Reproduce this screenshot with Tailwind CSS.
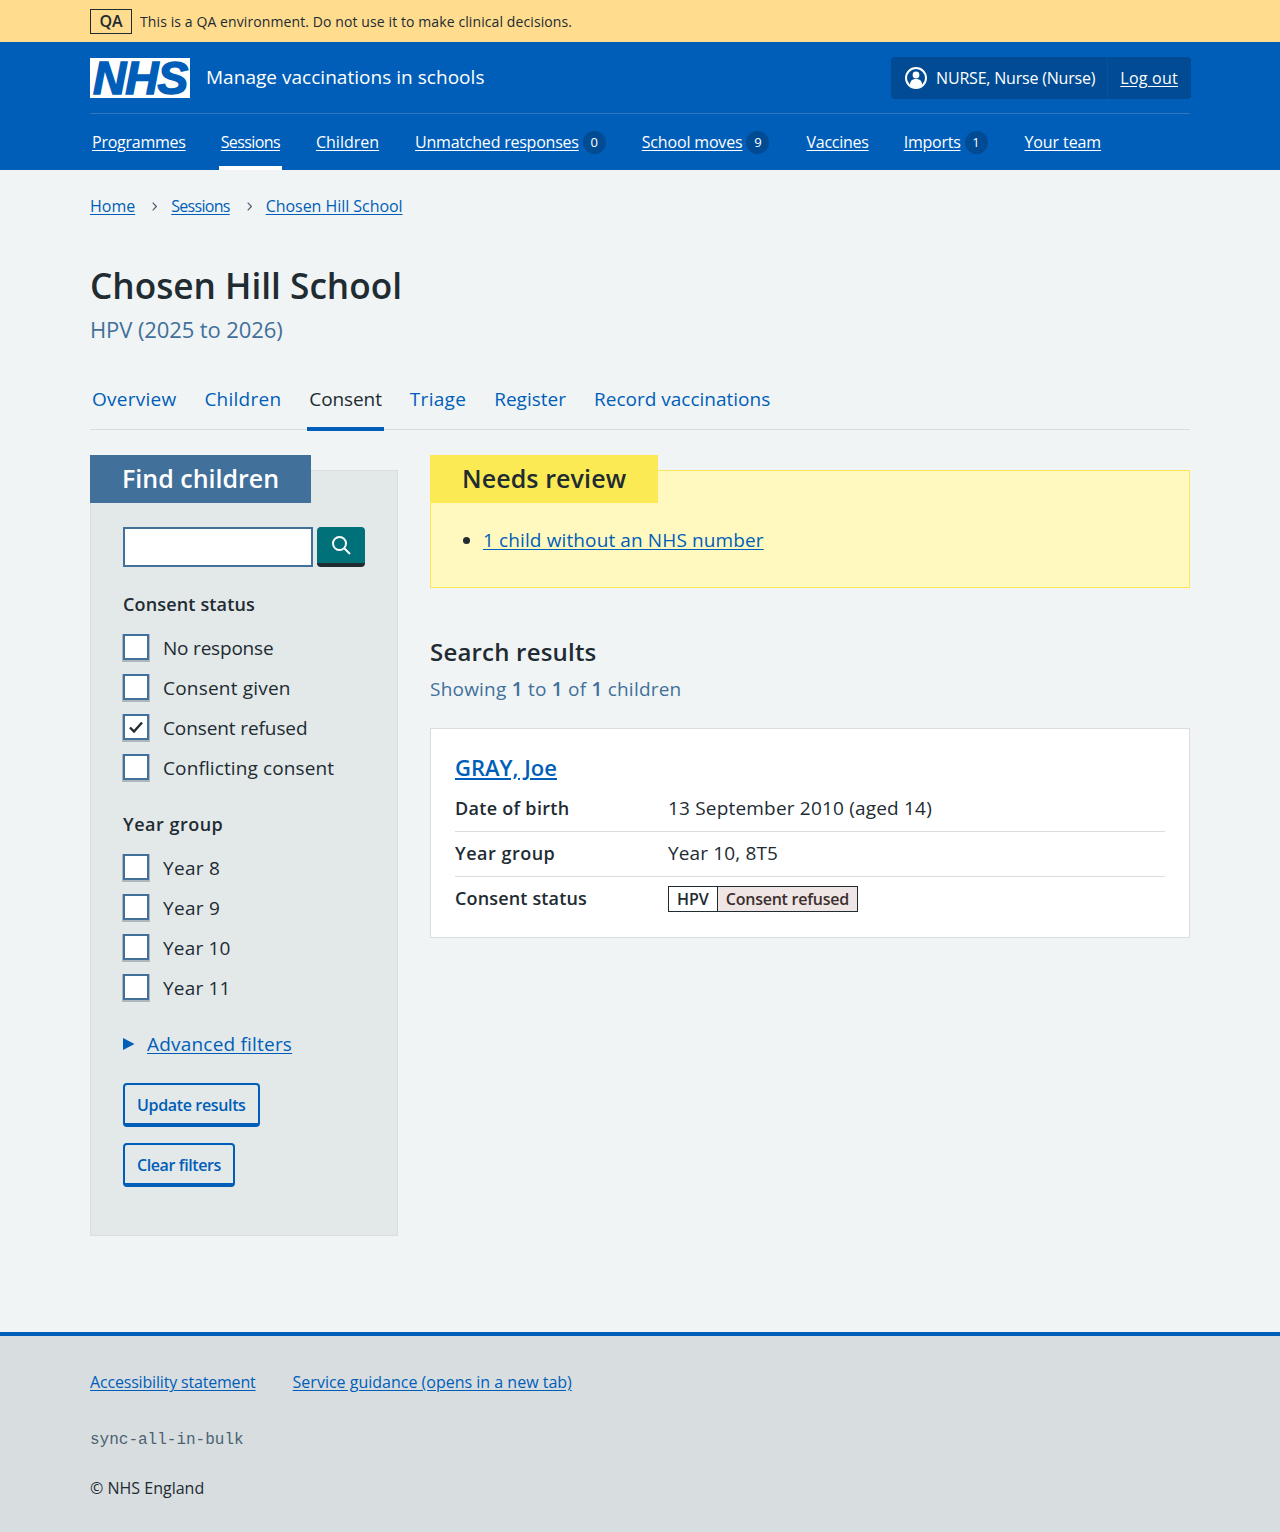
<!DOCTYPE html>
<html lang="en">
<head>
  <meta charset="UTF-8" />
  <meta name="viewport" content="width=device-width, initial-scale=1.0" />
  <title>Chosen Hill School – Manage vaccinations in schools</title>
  <script src="https://cdn.jsdelivr.net/npm/@tailwindcss/browser@4"></script>
</head>

<body class="bg-[#f0f4f5] text-[#212b32] font-['Open_Sans',sans-serif] min-h-[1532px] flex flex-col">
  <!-- QA banner -->
  <div class="h-[42px] bg-[#ffdc8e] px-[90px] flex items-center">
    <strong class="w-[42px] h-[25px] border border-[#212b32] flex items-center justify-center text-[16px] font-semibold">QA</strong>
    <p class="ml-[8px] text-[14px] tracking-[0.1px]">This is a QA environment. Do not use it to make clinical decisions.</p>
  </div>

  <!-- Header -->
  <header class="h-[128px] bg-[#005eb8] px-[90px] text-white">
    <div class="h-[72px] border-b border-[#2f78c0] flex items-start">
      <a href="#" class="mt-[16px] w-[100px] h-[40px] bg-white text-[#005eb8] flex items-center justify-center font-['Liberation_Sans',sans-serif] font-bold italic text-[46px] leading-[40px] tracking-[-1px] [-webkit-text-stroke:1.5px_#005eb8]">NHS</a>
      <span class="ml-[16px] mt-[21px] text-[19px] tracking-[0.03px]">Manage vaccinations in schools</span>
      <div class="ml-auto mr-[-1px] mt-[15px] h-[42px] bg-[#004b93] rounded-[4px] flex items-center text-[16px]">
        <div class="h-full pl-[14px] pr-[12px] flex items-center gap-[9px] border-r border-[#00549f]">
          <svg class="w-[22px] h-[22px]" viewBox="0 0 22 22" fill="none">
            <circle cx="11" cy="11" r="10" stroke="white" stroke-width="2" />
            <circle cx="11" cy="8" r="3.4" fill="white" />
            <path d="M5 18c0-4 2-6 6-6s6 2 6 6c-1.500 1.500-3.500 2.500-6 2.500s-4.500-1-6-2.500z" fill="white" />
          </svg>
          <span class="tracking-[-0.2px]">NURSE, Nurse (Nurse)</span>
        </div>
        <a href="#" class="pl-[12px] pr-[13px] underline underline-offset-2 tracking-[0.25px]">Log out</a>
      </div>
    </div>
    <nav class="h-[56px] flex text-[16px]">
      <a href="#" class="ml-[2px] mt-[16px] underline underline-offset-2 tracking-[-0.25px]">Programmes</a>
      <div class="ml-[35px] relative">
        <a href="#" class="block mt-[16px] underline underline-offset-2 tracking-[-0.6px]">Sessions</a>
        <span class="absolute left-[-2px] right-[-2px] bottom-0 h-[4px] bg-white"></span>
      </div>
      <a href="#" class="ml-[36px] mt-[16px] underline underline-offset-2">Children</a>
      <a href="#" class="ml-[36px] mt-[16px] underline underline-offset-2 tracking-[-0.22px]">Unmatched responses</a>
      <span class="ml-[4px] mt-[17px] w-[23px] h-[23px] rounded-full bg-[#004b93] flex items-center justify-center text-[13px]">0</span>
      <a href="#" class="ml-[36px] mt-[16px] underline underline-offset-2 tracking-[-0.17px]">School moves</a>
      <span class="ml-[4px] mt-[17px] w-[23px] h-[23px] rounded-full bg-[#004b93] flex items-center justify-center text-[13px]">9</span>
      <a href="#" class="ml-[37px] mt-[16px] underline underline-offset-2 tracking-[-0.25px]">Vaccines</a>
      <a href="#" class="ml-[35px] mt-[16px] underline underline-offset-2 tracking-[-0.25px]">Imports</a>
      <span class="ml-[4px] mt-[17px] w-[23px] h-[23px] rounded-full bg-[#004b93] flex items-center justify-center text-[13px]">1</span>
      <a href="#" class="ml-[37px] mt-[16px] underline underline-offset-2 tracking-[-0.1px]">Your team</a>
    </nav>
  </header>

  <main class="flex-1 px-[90px]">
    <!-- Breadcrumbs -->
    <nav class="h-[72px] flex items-center text-[16px] text-[#005eb8]">
      <a href="#" class="underline underline-offset-2">Home</a>
      <svg class="ml-[17px] mr-[14px] w-[5px] h-[9px]" viewBox="0 0 5 9" fill="none"><path d="M.7.7l3.600 3.800L.7 8.300" stroke="#4c6272" stroke-width="1.200" /></svg>
      <a href="#" class="underline underline-offset-2 tracking-[-0.7px]">Sessions</a>
      <svg class="ml-[17px] mr-[14px] w-[5px] h-[9px]" viewBox="0 0 5 9" fill="none"><path d="M.7.7l3.600 3.800L.7 8.300" stroke="#4c6272" stroke-width="1.200" /></svg>
      <a href="#" class="underline underline-offset-2 tracking-[-0.05px]">Chosen Hill School</a>
    </nav>

    <h1 class="mt-[21px] text-[35.2px] leading-[45px] font-semibold">Chosen Hill School</h1>
    <p class="mt-[6px] text-[22px] leading-[30px] text-[#41709a] tracking-[-0.1px]">HPV (2025 to 2026)</p>

    <!-- Tabs -->
    <nav class="mt-[30px] h-[56px] border-b border-[#d8dde0] flex text-[19px] text-[#005eb8]">
      <a href="#" class="px-[2px] pt-[11px] tracking-[0.25px]">Overview</a>
      <a href="#" class="ml-[24px] px-[2px] pt-[11px] tracking-[0.25px]">Children</a>
      <a href="#" class="ml-[24px] px-[2px] pt-[11px] text-[#212b32] border-b-4 border-[#005eb8] h-[57px] tracking-[-0.1px]">Consent</a>
      <a href="#" class="ml-[24px] px-[2px] pt-[11px] tracking-[0.3px]">Triage</a>
      <a href="#" class="ml-[24px] px-[2px] pt-[11px]">Register</a>
      <a href="#" class="ml-[24px] px-[2px] pt-[11px]">Record vaccinations</a>
    </nav>

    <div class="mt-[25px] flex items-start gap-[32px]">
      <!-- Filters -->
      <aside class="w-[308px] shrink-0 pt-[15px]">
        <div class="h-[766px] bg-[#e3e8e9] border border-[#d8dde0] px-[32px] relative">
          <h2 class="absolute left-[-1px] top-[-16px] w-[221px] h-[48px] bg-[#41709a] text-white pl-[32px] text-[25px] leading-[46px] font-semibold">Find children</h2>
          <div class="pt-[56px] flex gap-[4px]">
            <input type="text" class="w-[190px] h-[40px] bg-white border-2 border-[#41709a] outline-none" />
            <button class="w-[48px] h-[40px] bg-[#007178] border-b-4 border-[#212b32] rounded-[4px] flex items-center justify-center">
              <svg class="w-[20px] h-[20px]" viewBox="0 0 20 20" fill="none" stroke="white" stroke-width="2"><circle cx="8.500" cy="8.500" r="6.500" /><path d="M13.500 13.500l5.500 5.500" /></svg>
            </button>
          </div>

          <h3 class="mt-[24px] text-[18px] leading-[26px] font-semibold tracking-[0.15px]">Consent status</h3>
          <div class="mt-[17px] flex flex-col gap-[14px] text-[19px]">
            <label class="flex items-center gap-[14px] h-[26px]"><span class="w-[26px] h-[26px] bg-white border-2 border-[#41709a] shadow-[0_1px_0_1px_#aeb7bd]"></span><span class="mt-[2px] tracking-[-0.2px]">No response</span></label>
            <label class="flex items-center gap-[14px] h-[26px]"><span class="w-[26px] h-[26px] bg-white border-2 border-[#41709a] shadow-[0_1px_0_1px_#aeb7bd]"></span><span class="mt-[2px] tracking-[0.2px]">Consent given</span></label>
            <label class="flex items-center gap-[14px] h-[26px]"><span class="w-[26px] h-[26px] bg-white border-2 border-[#41709a] shadow-[0_1px_0_1px_#aeb7bd] flex items-center justify-center"><svg class="w-[14px] h-[12px]" viewBox="0 0 14 12" fill="none"><path d="M1 6.500l4 4L13 1.500" stroke="#212b32" stroke-width="2.400" /></svg></span><span class="mt-[2px] tracking-[-0.1px]">Consent refused</span></label>
            <label class="flex items-center gap-[14px] h-[26px]"><span class="w-[26px] h-[26px] bg-white border-2 border-[#41709a] shadow-[0_1px_0_1px_#aeb7bd]"></span><span class="mt-[2px] tracking-[0.12px]">Conflicting consent</span></label>
          </div>

          <h3 class="mt-[31px] text-[18px] leading-[26px] font-semibold tracking-[0.5px]">Year group</h3>
          <div class="mt-[17px] flex flex-col gap-[14px] text-[19px]">
            <label class="flex items-center gap-[14px] h-[26px]"><span class="w-[26px] h-[26px] bg-white border-2 border-[#41709a] shadow-[0_1px_0_1px_#aeb7bd]"></span><span class="mt-[2px] tracking-[0.3px]">Year 8</span></label>
            <label class="flex items-center gap-[14px] h-[26px]"><span class="w-[26px] h-[26px] bg-white border-2 border-[#41709a] shadow-[0_1px_0_1px_#aeb7bd]"></span><span class="mt-[2px] tracking-[0.3px]">Year 9</span></label>
            <label class="flex items-center gap-[14px] h-[26px]"><span class="w-[26px] h-[26px] bg-white border-2 border-[#41709a] shadow-[0_1px_0_1px_#aeb7bd]"></span><span class="mt-[2px] tracking-[0.2px]">Year 10</span></label>
            <label class="flex items-center gap-[14px] h-[26px]"><span class="w-[26px] h-[26px] bg-white border-2 border-[#41709a] shadow-[0_1px_0_1px_#aeb7bd]"></span><span class="mt-[2px] tracking-[0.2px]">Year 11</span></label>
          </div>

          <div class="mt-[31px] flex items-center text-[19px] leading-[26px] text-[#005eb8]">
            <svg class="w-[12px] h-[14px]" viewBox="0 0 12 14"><path d="M0 1l11.500 6L0 13z" fill="#005eb8" /></svg>
            <a href="#" class="ml-[12px] underline underline-offset-2 tracking-[0.2px]">Advanced filters</a>
          </div>

          <button class="mt-[26px] block h-[44px] px-[12px] pt-[1px] bg-transparent border-2 border-b-4 border-[#005eb8] rounded-[4px] text-[16px] font-semibold text-[#005eb8] tracking-[-0.35px]">Update results</button>
          <button class="mt-[16px] block h-[44px] px-[12px] pt-[1px] bg-transparent border-2 border-b-4 border-[#005eb8] rounded-[4px] text-[16px] font-semibold text-[#005eb8] tracking-[-0.4px]">Clear filters</button>
        </div>
      </aside>

      <!-- Results -->
      <section class="flex-1 pt-[15px]">
        <div class="h-[118px] bg-[#fff9c0] border border-[#fde65e] relative">
          <h2 class="absolute left-[-1px] top-[-16px] w-[228px] h-[48px] bg-[#fcea55] pl-[32px] text-[25px] leading-[46px] font-semibold tracking-[0.1px]">Needs review</h2>
          <ul class="pt-[56px] pl-[33px] list-disc text-[19px] leading-[26px] ml-[19px]">
            <li class="marker:text-[#212b32]"><a href="#" class="text-[#005eb8] underline underline-offset-2 tracking-[0.12px]">1 child without an NHS number</a></li>
          </ul>
        </div>

        <h2 class="mt-[47px] text-[24px] leading-[34px] font-semibold tracking-[0.2px]">Search results</h2>
        <p class="mt-[7px] text-[19px] leading-[26px] text-[#41709a] tracking-[0.22px]">Showing <b class="font-semibold">1</b> to <b class="font-semibold">1</b> of <b class="font-semibold">1</b> children</p>

        <div class="mt-[26px] h-[210px] bg-white border border-[#d8dde0] px-[24px]">
          <h3 class="pt-[23px] text-[22px] leading-[30px] font-semibold"><a href="#" class="text-[#005eb8] underline underline-offset-2">GRAY, Joe</a></h3>
          <dl class="text-[18px]">
            <div class="h-[50px] pt-[3px] flex items-center border-b border-[#d8dde0]"><dt class="w-[213px] font-semibold tracking-[0.3px]">Date of birth</dt><dd class="text-[19px] tracking-[0.19px]">13 September 2010 (aged 14)</dd></div>
            <div class="h-[45px] pb-[2px] flex items-center border-b border-[#d8dde0]"><dt class="w-[213px] font-semibold tracking-[0.5px]">Year group</dt><dd class="text-[19px] tracking-[0.15px]">Year 10, 8T5</dd></div>
            <div class="h-[45px] pb-[2px] flex items-center"><dt class="w-[213px] font-semibold tracking-[0.15px]">Consent status</dt>
              <dd class="flex h-[26px] border border-[#212b32] text-[16px] font-semibold leading-[24px]">
                <span class="px-[8px] bg-white border-r border-[#212b32]">HPV</span>
                <span class="px-[8px] bg-[#efe5e5] text-[#3a2f2c] tracking-[-0.25px]">Consent refused</span>
              </dd>
            </div>
          </dl>
        </div>
      </section>
    </div>
  </main>

  <!-- Footer -->
  <footer class="h-[200px] bg-[#d8dde0] border-t-4 border-[#005eb8] px-[90px] text-[16px]">
    <div class="pt-[34px] flex gap-[37px] text-[#005eb8] leading-[24px]">
      <a href="#" class="underline underline-offset-2 tracking-[-0.18px]">Accessibility statement</a>
      <a href="#" class="underline underline-offset-2">Service guidance (opens in a new tab)</a>
    </div>
    <p class="mt-[34px] font-['Liberation_Mono',monospace] text-[#4c6272] leading-[24px]">sync-all-in-bulk</p>
    <p class="mt-[24px] leading-[24px]">© NHS England</p>
  </footer>
</body>
</html>
